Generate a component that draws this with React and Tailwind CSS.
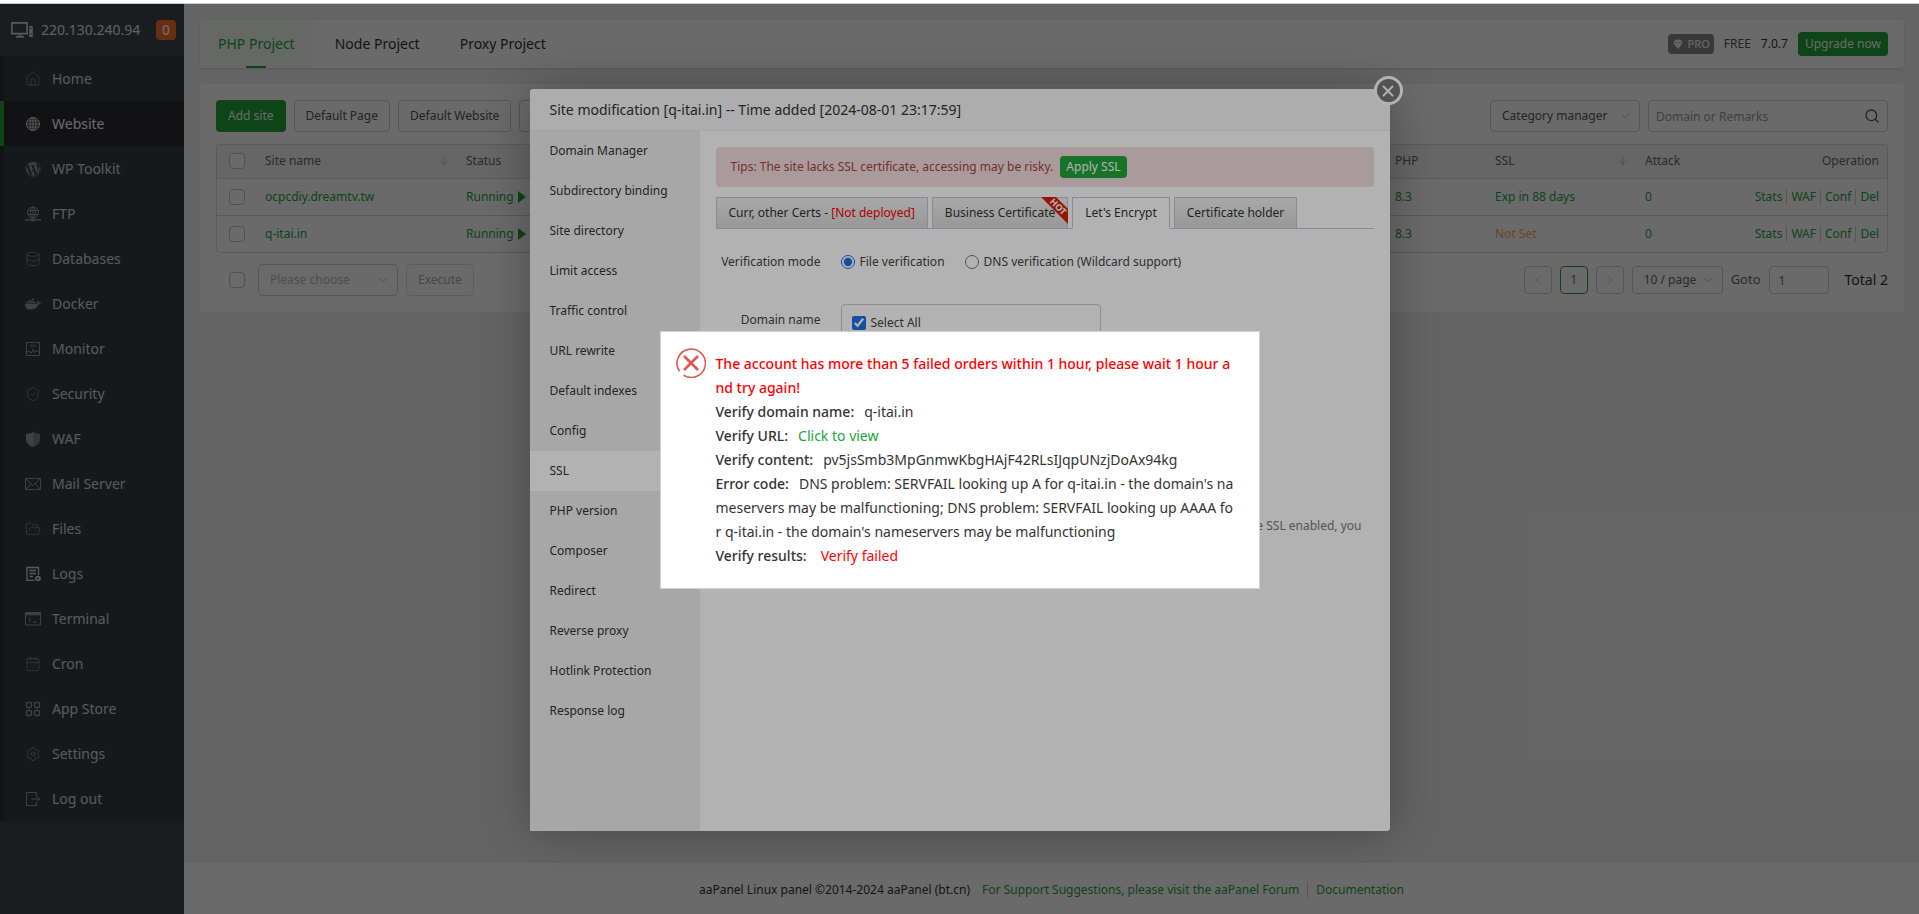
import React, { useState } from 'react';
import {
  House, Database, ShieldCheck, FolderOpen, CalendarDays,
  Settings, ArrowDown, ChevronDown, ChevronLeft, ChevronRight, Search, X, Gem,
} from 'lucide-react';
import { FaDocker, FaWordpress } from 'react-icons/fa';

const FtpIcon = ({ className }) => (
  <svg viewBox="0 0 16 16" fill="none" stroke="currentColor" className={className}>
    <circle cx="8" cy="6.5" r="5.5" />
    <ellipse cx="8" cy="6.5" rx="2.5" ry="5.5" />
    <path d="M3 4.5h10M3 8.5h10M8 1v11" />
    <path d="M0 13.8h16" strokeWidth="1.4" />
    <path d="M6 14h4" strokeWidth="2.6" />
  </svg>
);

const GlobeIcon = ({ className }) => (
  <svg viewBox="0 0 16 16" fill="none" stroke="currentColor" className={className}>
    <circle cx="8" cy="8" r="6.5" />
    <ellipse cx="8" cy="8" rx="3" ry="6.5" />
    <path d="M8 1.5v13M1.5 8h13M2.5 5h11M2.5 11h11" />
  </svg>
);

const MonitorIcon = ({ className }) => (
  <svg viewBox="0 0 16 16" fill="none" stroke="currentColor" className={className}>
    <path d="M1.5 1.5h13v13h-13z" />
    <path d="M5 4h6M5 5.5h6" opacity="0.6" />
    <path d="M2.5 10.5h2l1.5 2 2-4 1.5 3 1.2-1.5h3" />
  </svg>
);

const WafIcon = ({ className }) => (
  <svg viewBox="0 0 16 16" fill="currentColor" className={className}>
    <path d="M8 .5 6.5 2 1 3v5.5C1 12 4 14.5 8 16z" />
    <path d="M8 .5 9.5 2 15 3v5.5C15 12 12 14.5 8 16z" opacity="0.75" />
  </svg>
);

const MailIcon = ({ className }) => (
  <svg viewBox="0 0 16 16" fill="none" stroke="currentColor" className={className}>
    <path d="M.5 2.5h15v11H.5z" />
    <path d="m1 3 7 6.5L15 3M1 13l5-5.5M15 13l-5-5.5" />
  </svg>
);

const LogsIcon = ({ className }) => (
  <svg viewBox="0 0 16 16" fill="none" stroke="currentColor" strokeWidth="1.3" className={className}>
    <path d="M9.5 14.3H2V1.5h11.5V9" />
    <path d="M4.5 4.5H11M4.5 7.5H11M4.5 10.5H8" />
    <circle cx="13" cy="12.5" r="1.9" strokeWidth="1.8" />
  </svg>
);

const TerminalIcon = ({ className }) => (
  <svg viewBox="0 0 16 16" fill="none" stroke="currentColor" className={className}>
    <path d="M.5 1.5h15V14H.5z" />
    <path d="M.5 3h15" strokeWidth="2.5" />
    <path d="m3.5 6.5 2.5 2-2.5 2M8 11h4" />
  </svg>
);

const AppsIcon = ({ className }) => (
  <svg viewBox="0 0 16 16" fill="none" stroke="currentColor" strokeWidth="1.3" className={className}>
    <rect x="1.5" y="1.5" width="5" height="5" rx="1" />
    <rect x="9.5" y="1.5" width="5" height="5" rx="1" />
    <rect x="1.5" y="9.5" width="5" height="5" rx="1" />
    <rect x="9.5" y="9.5" width="5" height="5" rx="1" />
  </svg>
);

const LogoutIcon = ({ className }) => (
  <svg viewBox="0 0 16 16" fill="none" stroke="currentColor" className={className}>
    <path d="M11.5 5V1.5h-10v13h10V11" />
    <path d="M6.5 8h8M12 5.5 14.5 8 12 10.5" />
  </svg>
);

const ServerIcon = () => (
  <svg viewBox="0 0 22 16" fill="none" stroke="currentColor" className="h-4 w-[22px] text-[#d8d8d8]">
    <path d="M.9.9h15.2v10.7H.9z" strokeWidth="1.6" />
    <path d="M5 14.8h8" strokeWidth="1.6" />
    <path d="M7 13h4" />
    <path d="M20 4v11" strokeWidth="3.5" />
    <path d="M19.2 6.5h1.6M19.2 12h1.6" stroke="#3d474c" />
  </svg>
);

const menu = [
  { name: 'Home', icon: House },
  { name: 'Website', icon: GlobeIcon },
  { name: 'WP Toolkit', icon: FaWordpress },
  { name: 'FTP', icon: FtpIcon },
  { name: 'Databases', icon: Database },
  { name: 'Docker', icon: FaDocker },
  { name: 'Monitor', icon: MonitorIcon },
  { name: 'Security', icon: ShieldCheck },
  { name: 'WAF', icon: WafIcon },
  { name: 'Mail Server', icon: MailIcon },
  { name: 'Files', icon: FolderOpen },
  { name: 'Logs', icon: LogsIcon },
  { name: 'Terminal', icon: TerminalIcon },
  { name: 'Cron', icon: CalendarDays },
  { name: 'App Store', icon: AppsIcon },
  { name: 'Settings', icon: Settings },
  { name: 'Log out', icon: LogoutIcon },
];

const sites = [
  { name: 'ocpcdiy.dreamtv.tw', ssl: 'Exp in 88 days', expired: false },
  { name: 'q-itai.in', ssl: 'Not Set', expired: true },
];

const modalMenu = [
  'Domain Manager', 'Subdirectory binding', 'Site directory', 'Limit access', 'Traffic control',
  'URL rewrite', 'Default indexes', 'Config', 'SSL', 'PHP version', 'Composer', 'Redirect',
  'Reverse proxy', 'Hotlink Protection', 'Response log',
];

const Sidebar = () => (
  <aside className="w-[184px] shrink-0 bg-[#3d474c]">
    <div className="flex h-[52px] items-center pl-[11px] pr-2">
      <ServerIcon />
      <span className="ml-2 flex-1 text-sm text-[#e4e4e4]">220.130.240.94</span>
      <span className="h-5 w-5 rounded bg-[#fc6d26] text-center text-sm font-medium leading-5 text-white">0</span>
    </div>
    <nav>
      {menu.map(({ name, icon: Icon }) => {
        const active = name === 'Website';
        return (
          <a
            key={name}
            href="#"
            className={`flex h-[45px] items-center border-l-4 pl-[21px] text-sm ${
              active ? 'border-[#20a53a] bg-[#2c2e35] text-white' : 'border-[#2c3036] bg-[#363f43] text-[#d8d8d8]'
            }`}
          >
            <Icon
              strokeWidth={name === 'WP Toolkit' || name === 'Docker' ? 0 : 1}
              className={`h-4 w-4 ${active || name === 'Logs' ? 'text-[#d8d8d8]' : 'text-[#969a9e]'}`}
            />
            <span className="ml-[11px]">{name}</span>
          </a>
        );
      })}
    </nav>
  </aside>
);

const CheckBox = ({ label }) => (
  <input
    type="checkbox"
    aria-label={label}
    className="block h-4 w-4 appearance-none rounded-sm border border-[#c4c4c4] bg-white"
  />
);

const Header = () => (
  <div className="flex h-12 items-center justify-between rounded bg-white pr-4 shadow-sm">
    <div className="flex h-full gap-1">
      <a href="#" className="flex flex-col items-center bg-[#f3faf5] px-[18px] pt-[14px] text-sm text-[#20a53a]">
        PHP Project
        <span className="mt-auto h-[2px] w-5 bg-[#20a53a]" />
      </a>
      <a href="#" className="px-[18px] pt-[14px] text-sm text-[#333]">Node Project</a>
      <a href="#" className="px-[18px] pt-[14px] text-sm text-[#333]">Proxy Project</a>
    </div>
    <div className="flex items-center gap-[10px] text-xs text-[#555]">
      <span className="flex h-5 items-center gap-1 rounded bg-[#888] px-1 text-[11px] font-medium text-[#f0f0f0]">
        <Gem className="h-3 w-3 fill-[#f0f0f0] stroke-[#888]" strokeWidth={1} />
        PRO
      </span>
      <span>FREE</span>
      <span className="text-[#333]">7.0.7</span>
      <button className="h-6 rounded-sm bg-[#20a53a] px-[7px] text-white">Upgrade now</button>
    </div>
  </div>
);

const Operations = () => (
  <div className="flex justify-end">
    {['Stats', 'WAF', 'Conf', 'Del'].map((op, i) => (
      <a key={op} href="#" className={i ? 'ml-1 border-l border-[#d4d4d4] pl-1' : ''}>{op}</a>
    ))}
  </div>
);

const SiteTable = () => (
  <div className="mt-3 overflow-hidden rounded border border-[#d8d8d8]">
    <table className="w-full table-fixed text-left text-xs text-[#20a53a]">
      <colgroup>
        <col className="w-10" />
        <col className="w-[201px]" />
        <col className="w-[110px]" />
        <col />
        <col className="w-[100px]" />
        <col className="w-[150px]" />
        <col className="w-[90px]" />
        <col className="w-[160px]" />
      </colgroup>
      <thead className="bg-[#f6f6f6] text-[#666]">
        <tr className="h-[33px]">
          <th className="pl-3"><CheckBox label="Select all sites" /></th>
          <th className="px-2 font-normal">
            <span className="flex items-center justify-between">Site name <ArrowDown className="h-3 w-3 text-[#bbb]" /></span>
          </th>
          <th className="px-2 font-normal">Status</th>
          <th></th>
          <th className="px-2 font-normal">PHP</th>
          <th className="px-2 font-normal">
            <span className="flex items-center justify-between">SSL <ArrowDown className="h-3 w-3 text-[#bbb]" /></span>
          </th>
          <th className="px-2 font-normal">Attack</th>
          <th className="px-2 text-right font-normal">Operation</th>
        </tr>
      </thead>
      <tbody>
        {sites.map((site) => (
          <tr key={site.name} className="h-[37px] border-t border-[#d8d8d8]">
            <td className="pl-3"><CheckBox label={site.name} /></td>
            <td className="px-2"><a href="#">{site.name}</a></td>
            <td className="px-2">
              <a href="#" className="flex items-center gap-1">
                Running
                <svg viewBox="0 0 8 12" className="h-3 w-2 fill-current"><path d="M0 0 8 6 0 12z" /></svg>
              </a>
            </td>
            <td></td>
            <td className="px-2"><a href="#">8.3</a></td>
            <td className="px-2"><a href="#" className={site.expired ? 'text-[#f0ad4e]' : ''}>{site.ssl}</a></td>
            <td className="px-2"><a href="#">0</a></td>
            <td className="px-2"><Operations /></td>
          </tr>
        ))}
      </tbody>
    </table>
  </div>
);

const SelectBox = ({ label, value, className }) => (
  <div className={`relative ${className}`}>
    <select aria-label={label} className="h-full w-full appearance-none rounded border border-[#ccc] bg-transparent pl-[11px] text-xs">
      <option>{value}</option>
    </select>
    <ChevronDown strokeWidth={1.5} className="pointer-events-none absolute right-2 top-1/2 h-[14px] w-[14px] -translate-y-1/2 text-[#aaa]" />
  </div>
);

const SitePanel = () => (
  <div className="mt-4 rounded bg-white p-4">
    <div className="flex items-center justify-between">
      <div className="flex gap-2 text-xs text-[#555]">
        <button className="h-8 rounded-sm bg-[#20a53a] px-3 text-white">Add site</button>
        <button className="h-8 rounded-sm border border-[#ccc] px-[11px]">Default Page</button>
        <button className="h-8 rounded-sm border border-[#ccc] px-[11px]">Default Website</button>
        <button aria-label="PHP CLI version" className="h-8 w-28 rounded-sm border border-[#ccc]" />
      </div>
      <div className="flex gap-2">
        <SelectBox label="Category" value="Category manager" className="h-8 w-[150px] text-[#555]" />
        <div className="relative h-8 w-60">
          <input
            type="text"
            aria-label="Search sites"
            placeholder="Domain or Remarks"
            className="h-full w-full rounded border border-[#ccc] pl-[7px] text-xs placeholder:text-[#999]"
          />
          <Search className="absolute right-2 top-2 h-4 w-4 text-[#555]" />
        </div>
      </div>
    </div>
    <SiteTable />
    <div className="mt-[11px] flex items-center justify-between">
      <div className="flex items-center pl-[13px]">
        <CheckBox label="Select page" />
        <SelectBox label="Batch action" value="Please choose" className="ml-[13px] h-8 w-[140px] text-[#bbb]" />
        <button className="ml-2 h-8 rounded-sm border border-[#dcdcdc] px-[11px] text-xs text-[#aaa]">Execute</button>
      </div>
      <div className="flex items-center gap-2 text-xs text-[#666]">
        <button aria-label="Previous" className="flex h-7 w-7 items-center justify-center rounded border border-[#ccc] text-[#bbb]">
          <ChevronLeft className="h-[14px] w-[14px]" strokeWidth={1.5} />
        </button>
        <button className="h-7 w-7 rounded border border-[#20a53a] text-[#20a53a]">1</button>
        <button aria-label="Next" className="flex h-7 w-7 items-center justify-center rounded border border-[#ccc] text-[#bbb]">
          <ChevronRight className="h-[14px] w-[14px]" strokeWidth={1.5} />
        </button>
        <SelectBox label="Page size" value="10 / page" className="h-7 w-[91px]" />
        <label htmlFor="goto" className="text-[13px]">Goto</label>
        <input id="goto" type="text" defaultValue="1" className="h-7 w-[60px] rounded border border-[#ccc] pl-[9px] text-xs" />
        <span className="ml-2 text-sm text-[#333]">Total 2</span>
      </div>
    </div>
  </div>
);

const Footer = () => (
  <footer className="mt-auto flex h-[51px] items-center justify-center bg-white pt-[3px] text-xs text-[#333]">
    <span>aaPanel Linux panel ©2014-2024 aaPanel (bt.cn)</span>
    <a href="#" className="ml-3 border-r border-[#ccc] pr-2 text-[#20a53a]">
      For Support Suggestions, please visit the aaPanel Forum
    </a>
    <a href="#" className="ml-2 text-[#20a53a]">Documentation</a>
  </footer>
);

const HotRibbon = () => (
  <svg viewBox="0 0 27 27" className="absolute -right-px -top-px h-[27px] w-[27px] overflow-visible">
    <path d="M0 0h15l12 12v15z" fill="#d81e06" />
    <text x="15" y="12" transform="rotate(45 15 12)" textAnchor="middle" fontSize="9" fontWeight="700" fill="#fff">HOT</text>
  </svg>
);

const tabBase = 'relative -mb-px h-8 border border-[#c5c5d8] px-3 text-xs text-[#333]';
const tabIdle = 'bg-gradient-to-b from-[#f2f2f2] to-[#d9d9d9]';

const SslPanel = () => {
  const [mode, setMode] = useState('file');
  return (
    <section className="flex-1 rounded-b bg-white p-4 text-xs text-[#444]">
      <div className="flex h-10 items-center rounded bg-[#f2dede] pl-[15px] text-[#a94442]">
        Tips: The site lacks SSL certificate, accessing may be risky.
        <button className="ml-[7px] h-[22px] rounded-sm bg-[#20a53a] px-[6px] text-white">Apply SSL</button>
      </div>
      <div className="mt-[10px] flex gap-1 border-b border-[#c5c5d8]">
        <button className={`${tabBase} ${tabIdle}`}>
          Curr, other Certs - <span className="text-[#f00]">[Not deployed]</span>
        </button>
        <button className={`${tabBase} ${tabIdle}`}>
          Business Certificate
          <HotRibbon />
        </button>
        <button className={`${tabBase} border-b-white bg-white`}>Let's Encrypt</button>
        <button className={`${tabBase} ${tabIdle}`}>Certificate holder</button>
      </div>
      <div className="mt-[23px] flex h-5 items-center">
        <span className="w-[105px] text-right">Verification mode</span>
        <label className="ml-5 flex items-center gap-[5px]">
          <input type="radio" name="mode" checked={mode === 'file'} onChange={() => setMode('file')} className="h-[14px] w-[14px] accent-[#1a73e8]" />
          File verification
        </label>
        <label className="ml-5 flex items-center gap-[5px]">
          <input type="radio" name="mode" checked={mode === 'dns'} onChange={() => setMode('dns')} className="h-[14px] w-[14px] accent-[#1a73e8]" />
          DNS verification (Wildcard support)
        </label>
      </div>
      <div className="mt-8 flex">
        <span className="w-[105px] pt-2 text-right">Domain name</span>
        <div className="ml-5 h-[180px] w-[260px] rounded-sm border border-[#ccc] px-[10px] pt-[10px]">
          <label className="flex items-center gap-[5px]">
            <input type="checkbox" defaultChecked className="h-[14px] w-[14px] accent-[#1a73e8]" />
            Select All
          </label>
        </div>
      </div>
      <p className="mt-[34px] pr-3 text-right text-[#777]">the SSL enabled, you</p>
    </section>
  );
};

const SiteModal = () => (
  <div className="relative flex h-[742px] w-[860px] flex-col rounded bg-white text-[#333] shadow-[1px_1px_50px_rgba(0,0,0,0.3)]">
    <h2 className="h-[42px] rounded-t border-b border-[#eee] bg-[#f8f8f8] pl-5 text-sm leading-[42px]">
      Site modification [q-itai.in] -- Time added [2024-08-01 23:17:59]
    </h2>
    <button aria-label="Close" className="absolute -right-[13px] -top-[13px] flex h-[29px] w-[29px] items-center justify-center rounded-full border-[3px] border-white bg-[#777] text-white">
      <X className="h-[18px] w-[18px]" strokeWidth={2.5} />
    </button>
    <div className="flex flex-1">
      <nav className="w-[170px] bg-[#f0f0f1] text-xs">
        {modalMenu.map((item) => (
          <a key={item} href="#" className={`block h-10 pl-5 leading-10 ${item === 'SSL' ? 'bg-white' : ''}`}>{item}</a>
        ))}
      </nav>
      <SslPanel />
    </div>
  </div>
);

const ErrorAlert = () => (
  <div role="alert" className="flex w-[600px] border border-[#d0d0d0] bg-white py-5 pl-[15px] text-sm leading-6 text-[#333]">
    <svg viewBox="0 0 30 30" fill="none" stroke="#e2574c" className="-mt-1 h-[30px] w-[30px]">
      <path d="M7.5 27.2A14.2 14.2 0 1 0 3.5 23.3" strokeWidth="1.6" />
      <path d="M8 8l14 14M22 8 8 22" strokeWidth="2.6" />
    </svg>
    <div className="ml-[10px] whitespace-nowrap">
      <p className="font-medium text-[#f00]">
        The account has more than 5 failed orders within 1 hour, please wait 1 hour a<br />nd try again!
      </p>
      <p><span className="mr-[10px] font-medium">Verify domain name:</span>q-itai.in</p>
      <p><span className="mr-[10px] font-medium">Verify URL:</span><a href="#" className="text-[#20a53a]">Click to view</a></p>
      <p><span className="mr-[10px] font-medium">Verify content:</span>pv5jsSmb3MpGnmwKbgHAjF42RLsIJqpUNzjDoAx94kg</p>
      <p>
        <span className="mr-[10px] font-medium">Error code:</span>DNS problem: SERVFAIL looking up A for q-itai.in - the domain's na<br />
        meservers may be malfunctioning; DNS problem: SERVFAIL looking up AAAA fo<br />
        r q-itai.in - the domain's nameservers may be malfunctioning
      </p>
      <p><span className="mr-[14px] font-medium">Verify results:</span><span className="text-[#f00]">Verify failed</span></p>
    </div>
  </div>
);

const App = () => {
  return (
    <div className="flex h-screen flex-col border-t-[3px] border-white font-['Noto_Sans',sans-serif]">
      <div className="relative flex min-h-0 flex-1 overflow-hidden border-t border-[#ccc]">
        <Sidebar />
        <main className="flex min-w-0 flex-1 flex-col bg-[#f0f0f0]">
          <div className="pl-4 pr-[15px] pt-4">
            <Header />
            <SitePanel />
          </div>
          <Footer />
        </main>
        <div className="absolute inset-0 flex items-center justify-center bg-black/40 pt-[2px]">
          <SiteModal />
        </div>
        <div className="absolute inset-0 flex items-center justify-center bg-black/30 pt-[2px]">
          <ErrorAlert />
        </div>
      </div>
    </div>
  );
};

export default App;
